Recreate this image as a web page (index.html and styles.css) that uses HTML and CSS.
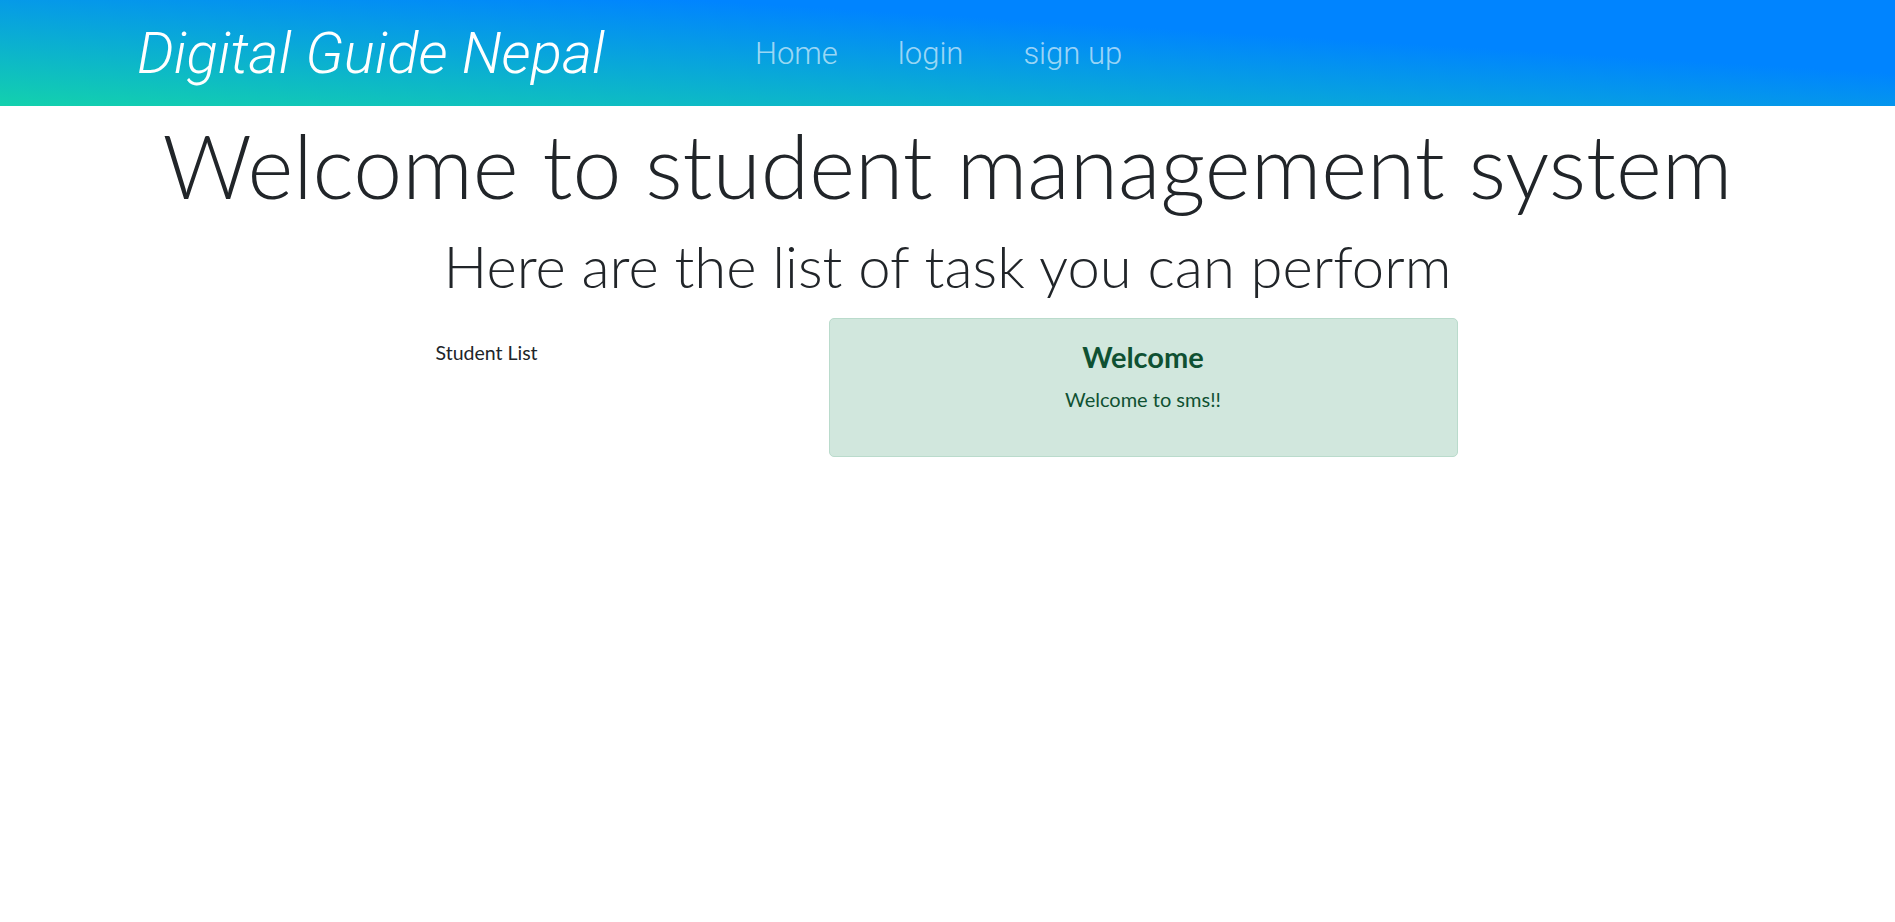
FILE: index.html
```html
<!DOCTYPE html>
<html lang="en">
<head>
<meta charset="utf-8">
<title>Digital Guide Nepal - SMS</title>
<link rel="stylesheet" href="styles.css">
</head>
<body>
<nav class="navbar">
  <a class="brand" href="#">Digital Guide Nepal</a>
  <ul class="nav-links">
    <li><a class="nav-link" href="#">Home</a></li>
    <li><a class="nav-link" href="#">login</a></li>
    <li><a class="nav-link" href="#">sign up</a></li>
  </ul>
</nav>
<main class="content">
  <h1 class="title">Welcome to student management system</h1>
  <h2 class="subtitle">Here are the list of task you can perform</h2>
  <div class="task-row">
    <div class="side">
      <a class="side-link" href="#">Student List</a>
    </div>
    <div class="alert">
      <h4 class="alert-heading">Welcome</h4>
      <p class="alert-text">Welcome to sms!!</p>
    </div>
  </div>
</main>
</body>
</html>
```

FILE: styles.css
```css
* { box-sizing: border-box; }

body {
  margin: 0;
  background: #ffffff;
  color: #212529;
  font-family: "Lato", "Open Sans", sans-serif;
  font-size: 20px;
  line-height: 1.5;
}

.navbar {
  height: 106px;
  display: flex;
  align-items: center;
  padding-left: 137px;
  background: linear-gradient(3.5deg, #13d1ad 0%, #0084ff 67%);
}

.brand {
  flex: 0 0 618px;
  font-family: "Roboto", sans-serif;
  font-style: italic;
  font-weight: 300;
  font-size: 58px;
  line-height: normal;
  color: #ffffff;
  text-decoration: none;
}

.nav-links {
  display: flex;
  gap: 60px;
  margin: 0;
  padding: 0;
  list-style: none;
}

.nav-link {
  font-family: "Roboto", sans-serif;
  font-weight: 300;
  font-size: 31px;
  line-height: normal;
  color: rgba(255, 255, 255, 0.62);
  text-decoration: none;
}

.content {
  display: flex;
  flex-direction: column;
  align-items: center;
}

.title {
  margin: 0;
  font-family: "Lato", sans-serif;
  font-weight: 300;
  font-size: 87.8px;
  line-height: 118px;
  color: #212529;
}

.subtitle {
  margin: 0;
  font-family: "Lato", sans-serif;
  font-weight: 300;
  font-size: 58px;
  line-height: 83px;
  color: #212529;
}

.task-row {
  width: 1024px;
  margin-top: 11px;
  display: flex;
}

.side {
  flex: 0 0 393px;
  padding-top: 19px;
}

.side-link {
  color: #212529;
  text-decoration: none;
  font-size: 19.5px;
}

.alert {
  flex: 0 0 629px;
  padding: 21px 20px 22px;
  background: #d1e7dd;
  border: 1px solid #badbcc;
  border-radius: 5px;
  color: #0f5132;
  text-align: center;
}

.alert-heading {
  margin: 0 0 9px;
  font-size: 29px;
  font-weight: 700;
  line-height: 1.2;
  color: #0f5132;
}

.alert-text {
  margin: 0 0 20px;
  font-size: 20px;
}
```
